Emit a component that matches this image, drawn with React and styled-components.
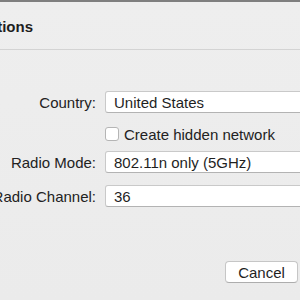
import React from "react";
import styled, { createGlobalStyle } from "styled-components";

const Global = createGlobalStyle`
  html, body {
    margin: 0;
    padding: 0;
    overflow: hidden;
    background: #ececec;
  }
  body {
    font-family: "Liberation Sans", Arial, sans-serif;
    color: #1a1a1a;
  }
`;

const Window = styled.div`
  width: 300px;
  height: 300px;
  display: flex;
  flex-direction: column;
  background: linear-gradient(#eeeeee, #ebebeb);
  border-top: 2px solid #7f7f7f;
  box-sizing: border-box;
  overflow: hidden;
`;

const Header = styled.div`
  height: 48px;
  display: flex;
  align-items: center;
  border-bottom: 1px solid #d3d3d3;
  box-sizing: border-box;
  padding-top: 2px;
`;

const TitleBox = styled.div`
  width: 33px;
  display: flex;
  justify-content: flex-end;
  white-space: nowrap;
`;

const Title = styled.span`
  font-size: 15px;
  font-weight: 700;
  color: #1e1e1e;
`;

const Form = styled.div`
  display: grid;
  grid-template-columns: 96px 230px;
  column-gap: 9px;
  row-gap: 12px;
  padding-top: 41px;
  align-items: center;
`;

const Label = styled.div`
  display: flex;
  justify-content: flex-end;
  white-space: nowrap;
  font-size: 15px;
  color: #222;
`;

const Field = styled.div`
  height: 22px;
  box-sizing: border-box;
  background: #fff;
  border: 1px solid #c9c9c9;
  border-bottom-color: #b3b3b3;
  border-radius: 3px;
  padding-left: 8px;
  display: flex;
  align-items: center;
  font-size: 15px;
  color: #1f1f1f;
  white-space: nowrap;
`;

const CheckRow = styled.label`
  grid-column: 2;
  height: 14px;
  margin: 2px 0 -2px;
  display: flex;
  align-items: center;
  gap: 5px;
  font-size: 15px;
  color: #222;
  white-space: nowrap;
`;

const Box = styled.span`
  width: 14px;
  height: 14px;
  box-sizing: border-box;
  background: #fff;
  border: 1px solid #b5b5b5;
  border-radius: 3px;
`;

const Footer = styled.div`
  margin-top: auto;
  display: flex;
  justify-content: flex-end;
  padding: 0 2px 17px 0;
`;

const Button = styled.button`
  width: 73px;
  height: 22px;
  background: #fff;
  border: 1px solid #c6c6c6;
  border-bottom-color: #adadad;
  border-radius: 4px;
  font-family: "Liberation Sans", Arial, sans-serif;
  font-size: 15px;
  color: #1f1f1f;
  padding: 0;
`;

export default function App() {
  return (
    <>
      <Global />
      <Window>
        <Header>
          <TitleBox>
            <Title>Network Options</Title>
          </TitleBox>
        </Header>
        <Form>
          <Label>Country:</Label>
          <Field>United States</Field>
          <CheckRow>
            <Box />
            Create hidden network
          </CheckRow>
          <Label>Radio Mode:</Label>
          <Field>802.11n only (5GHz)</Field>
          <Label>Radio Channel:</Label>
          <Field>36</Field>
        </Form>
        <Footer>
          <Button>Cancel</Button>
        </Footer>
      </Window>
    </>
  );
}
